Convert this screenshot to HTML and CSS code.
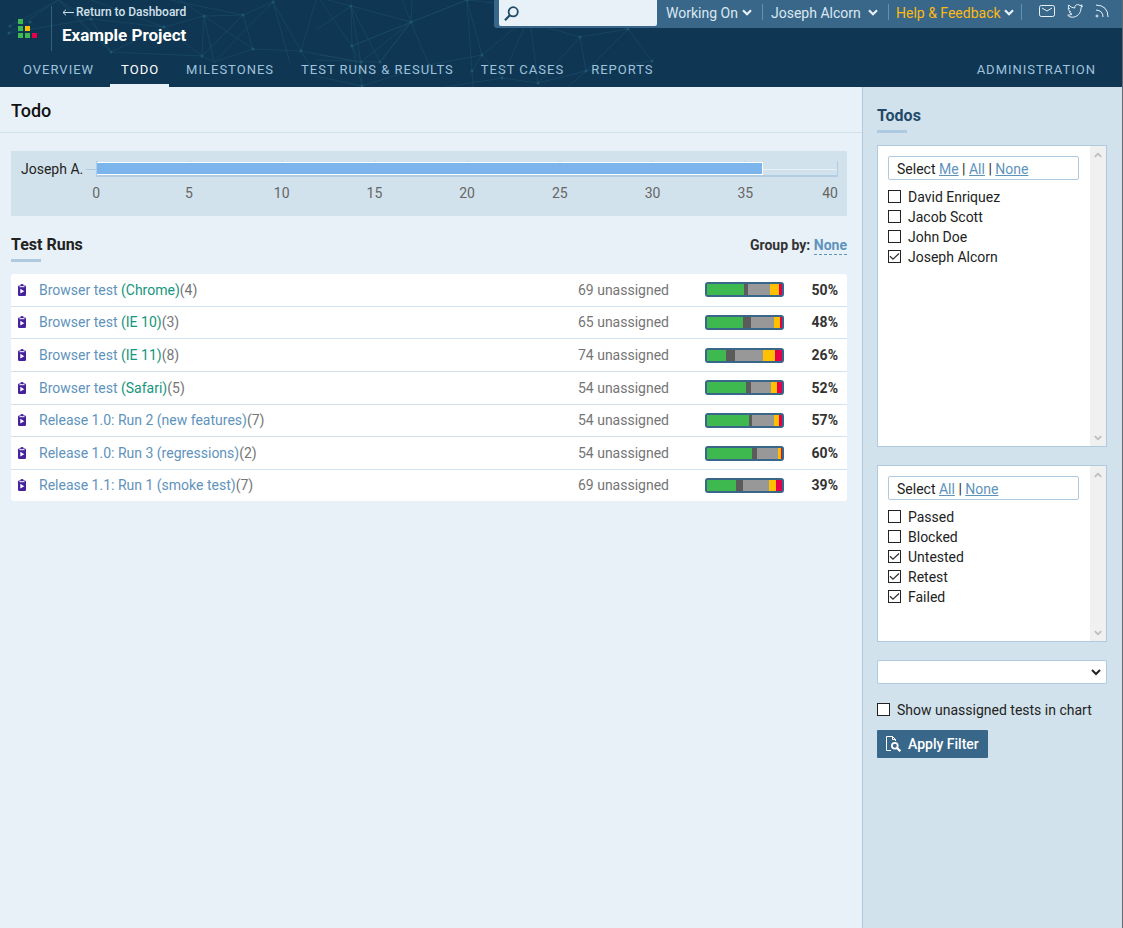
FILE: index.html
```html
<!DOCTYPE html>
<html lang="en">
<head>
<meta charset="UTF-8">
<meta name="viewport" content="width=device-width, initial-scale=1.0">
<title>Todo - Example Project</title>
<link rel="stylesheet" href="styles.css">
</head>
<body>
<!-- shared icons -->
<svg class="defs" aria-hidden="true">
<symbol id="chevron" viewBox="0 0 10 7"><path d="M1 1.2l4 4 4-4" fill="none" stroke="currentColor" stroke-width="2.2"/></symbol>
<symbol id="run" viewBox="0 0 8 12"><path d="M1.2 1.5H2.5V0.8Q2.5 0 4 0T5.5 0.8V1.5H6.8Q8 1.5 8 2.7V10.8Q8 12 6.8 12H1.2Q0 12 0 10.8V2.7Q0 1.5 1.2 1.5z" fill="#45219c"/><path d="M1.5 2.7h5" stroke="#fff"/><path d="M2.3 4.8v4.8l4-2.4z" fill="#fff"/></symbol>
</svg>
<div class="page">
<header class="header">
<svg class="network" width="660" height="87" viewBox="0 0 660 87" aria-hidden="true">
<path d="M9 33L58 0M10 26L58 0L91 19L164 27L111 52L58 0M9 33L91 19L111 52L202 56L164 27M111 52L60 0M164 27L91 0M164 27L204 16L243 15L170 0M204 16L202 56L214 62L253 49L243 15L273 2L301 51L316 0M204 16L253 49L301 51L361 62M204 16L180 0M202 56L243 15M204 16L214 62L273 2M273 2L290 63M301 51L316 76L362 86L361 62L320 55M320 0L352 46L351 6L328 0M351 6L316 30M351 6L411 22L361 62L352 46L411 22L380 62L351 6L361 62M411 22L402 0M411 22L412 0M411 22L467 0L352 46M411 22L429 65L362 86L352 46M411 22L380 62L316 60M467 0L472 71L482 55L467 0L520 6M482 55L429 65M482 55L502 78L538 83L586 71M482 55L515 28M472 71L473 87M502 78L524 28M538 83L531 28M502 78L445 87M538 83L580 37L548 28M580 37L586 71L652 61L628 29L586 71M580 37L628 29L615 24M568 87L586 71" fill="none" stroke="#1a4a66" stroke-width=".7"/>
<g fill="#1d5573"><circle cx="9" cy="33" r="1.5"/><circle cx="10" cy="26" r="1.5"/><circle cx="30" cy="22" r="1.5"/><circle cx="91" cy="19" r="1.5"/><circle cx="111" cy="52" r="1.5"/><circle cx="164" cy="27" r="1.5"/><circle cx="204" cy="16" r="1.5"/><circle cx="202" cy="56" r="1.5"/><circle cx="243" cy="15" r="1.5"/><circle cx="253" cy="49" r="1.5"/><circle cx="273" cy="2" r="1.5"/><circle cx="301" cy="51" r="1.5"/><circle cx="351" cy="6" r="1.5"/><circle cx="411" cy="22" r="1.5"/><circle cx="467" cy="0" r="1.5"/><circle cx="352" cy="46" r="1.5"/><circle cx="361" cy="62" r="1.5"/><circle cx="380" cy="62" r="1.5"/><circle cx="429" cy="65" r="1.5"/><circle cx="482" cy="55" r="1.5"/><circle cx="472" cy="71" r="1.5"/><circle cx="362" cy="86" r="1.5"/><circle cx="502" cy="78" r="1.5"/><circle cx="538" cy="83" r="1.5"/><circle cx="586" cy="71" r="1.5"/><circle cx="580" cy="37" r="1.5"/><circle cx="628" cy="29" r="1.5"/><circle cx="652" cy="61" r="1.5"/></g>
</svg>
<div class="top">
<svg class="logo" width="19" height="19" viewBox="0 0 19 19" role="img" aria-label="Logo"><path d="M0 0h5v5H0zM0 7h5v5H0zM0 14h5v5H0zM7 14h5v5H7z" fill="#3fb950"/><path d="M7 7h5v5H7z" fill="#fec001"/><path d="M14 14h5v5h-5z" fill="#e5004c"/></svg>
<div class="project">
<a class="back" href="#"><svg width="12" height="7" viewBox="0 0 12 7" aria-hidden="true"><path d="M12 3.5H1M4 .7L1 3.5l3 2.8" fill="none" stroke="currentColor"/></svg>Return to Dashboard</a>
<div class="project-name">Example Project</div>
</div>
<div class="userbar">
<label class="search">
<svg width="15" height="15" viewBox="0 0 15 15" aria-hidden="true"><circle cx="9.2" cy="5.8" r="4.6" fill="none" stroke="#1f4a68" stroke-width="1.8"/><path d="M5.8 9.2L1 14.2" stroke="#1f4a68" stroke-width="2.2"/></svg>
<input type="text" aria-label="Search">
</label>
<button class="menu working">Working On <svg width="10" height="7"><use href="#chevron"/></svg></button>
<button class="menu user">Joseph Alcorn <svg width="10" height="7"><use href="#chevron"/></svg></button>
<button class="menu help">Help &amp; Feedback <svg width="10" height="7"><use href="#chevron"/></svg></button>
<div class="social">
<a href="#" aria-label="Mail"><svg width="16" height="12" viewBox="0 0 16 12"><rect x=".5" y=".5" width="15" height="11" rx="1.8"/><path d="M3 3l5 3 5-3"/></svg></a>
<a href="#" aria-label="Twitter"><svg width="16" height="14" viewBox="0 0 16 14"><path d="M.7 11.2C2.4 11.2 3.8 10.9 5 10C3.5 9.8 2.7 9 2.3 7.8H3.7C2 7.2 1.2 6 1.2 4.5L2.5 4.9C1.2 3.7 1 2.2 1.7 .9C3.3 2.8 5.2 3.8 7.8 4C7.4 1.9 9 .6 10.7 .6C11.7 .6 12.4 1 13 1.6L15 .9L14.1 2.5L15.5 2.2L14 3.8C14 9.5 10 13.2 5.3 13.2C3.6 13.2 2 12.7 .7 11.2z"/></svg></a>
<a href="#" aria-label="RSS"><svg width="14" height="14" viewBox="0 0 14 14"><path d="M1 1Q13 1.5 13 13M1 6Q8 6.5 8 13"/><circle cx="2" cy="12" r="1"/></svg></a>
</div>
</div>
</div>
<nav class="tabs">
<a href="#">OVERVIEW</a>
<a href="#" class="active">TODO</a>
<a href="#">MILESTONES</a>
<a href="#">TEST RUNS &amp; RESULTS</a>
<a href="#">TEST CASES</a>
<a href="#">REPORTS</a>
<a href="#" class="admin">ADMINISTRATION</a>
</nav>
</header>
<div class="columns">
<main class="main">
<h1>Todo</h1>
<div class="content">
<div class="chart">
<div class="chart-label">Joseph A.</div>
<div class="tick"></div>
<div class="plot"><div class="bar" style="width:90%"></div></div>
<div class="scale"><span>0</span><span>5</span><span>10</span><span>15</span><span>20</span><span>25</span><span>30</span><span>35</span><span>40</span></div>
</div>
<div class="runs-head">
<h2>Test Runs</h2>
<div class="group">Group by: <a href="#">None</a></div>
</div>
<table class="runs">
<tr><td class="icon"><svg width="8" height="12"><use href="#run"/></svg></td><td><a href="#">Browser test <em>(Chrome)</em></a><span>(4)</span></td><td class="unassigned">69 unassigned</td><td class="progress"><div class="status"><i style="flex:37"></i><i style="flex:4"></i><i style="flex:22"></i><i style="flex:9"></i><i style="flex:3"></i></div></td><td class="percent">50%</td></tr>
<tr><td class="icon"><svg width="8" height="12"><use href="#run"/></svg></td><td><a href="#">Browser test <em>(IE 10)</em></a><span>(3)</span></td><td class="unassigned">65 unassigned</td><td class="progress"><div class="status"><i style="flex:36"></i><i style="flex:8"></i><i style="flex:23"></i><i style="flex:6"></i><i style="flex:2"></i></div></td><td class="percent">48%</td></tr>
<tr><td class="icon"><svg width="8" height="12"><use href="#run"/></svg></td><td><a href="#">Browser test <em>(IE 11)</em></a><span>(8)</span></td><td class="unassigned">74 unassigned</td><td class="progress"><div class="status"><i style="flex:19"></i><i style="flex:9"></i><i style="flex:28"></i><i style="flex:12"></i><i style="flex:7"></i></div></td><td class="percent">26%</td></tr>
<tr><td class="icon"><svg width="8" height="12"><use href="#run"/></svg></td><td><a href="#">Browser test <em>(Safari)</em></a><span>(5)</span></td><td class="unassigned">54 unassigned</td><td class="progress"><div class="status"><i style="flex:39"></i><i style="flex:5"></i><i style="flex:20"></i><i style="flex:6"></i><i style="flex:5"></i></div></td><td class="percent">52%</td></tr>
<tr><td class="icon"><svg width="8" height="12"><use href="#run"/></svg></td><td><a href="#">Release 1.0: Run 2 (new features)</a><span>(7)</span></td><td class="unassigned">54 unassigned</td><td class="progress"><div class="status"><i style="flex:42"></i><i style="flex:3"></i><i style="flex:22"></i><i style="flex:5"></i><i style="flex:3"></i></div></td><td class="percent">57%</td></tr>
<tr><td class="icon"><svg width="8" height="12"><use href="#run"/></svg></td><td><a href="#">Release 1.0: Run 3 (regressions)</a><span>(2)</span></td><td class="unassigned">54 unassigned</td><td class="progress"><div class="status"><i style="flex:45"></i><i style="flex:5"></i><i style="flex:21"></i><i style="flex:3"></i><i style="flex:1"></i></div></td><td class="percent">60%</td></tr>
<tr><td class="icon"><svg width="8" height="12"><use href="#run"/></svg></td><td><a href="#">Release 1.1: Run 1 (smoke test)</a><span>(7)</span></td><td class="unassigned">69 unassigned</td><td class="progress"><div class="status"><i style="flex:29"></i><i style="flex:7"></i><i style="flex:26"></i><i style="flex:7"></i><i style="flex:6"></i></div></td><td class="percent">39%</td></tr>
</table>
</div>
</main>
<aside class="sidebar">
<h2>Todos</h2>
<div class="listbox users">
<div class="list">
<div class="pick">Select <a href="#">Me</a> | <a href="#">All</a> | <a href="#">None</a></div>
<label><input type="checkbox">David Enriquez</label>
<label><input type="checkbox">Jacob Scott</label>
<label><input type="checkbox">John Doe</label>
<label><input type="checkbox" checked>Joseph Alcorn</label>
</div>
<div class="scroll"><svg class="up" width="8" height="6"><use href="#chevron"/></svg><svg width="8" height="6"><use href="#chevron"/></svg></div>
</div>
<div class="listbox statuses">
<div class="list">
<div class="pick">Select <a href="#">All</a> | <a href="#">None</a></div>
<label><input type="checkbox">Passed</label>
<label><input type="checkbox">Blocked</label>
<label><input type="checkbox" checked>Untested</label>
<label><input type="checkbox" checked>Retest</label>
<label><input type="checkbox" checked>Failed</label>
</div>
<div class="scroll"><svg class="up" width="8" height="6"><use href="#chevron"/></svg><svg width="8" height="6"><use href="#chevron"/></svg></div>
</div>
<select class="milestone" aria-label="Milestone"><option></option></select>
<label class="show"><input type="checkbox">Show unassigned tests in chart</label>
<button class="apply"><svg width="15" height="16" viewBox="0 0 15 16" aria-hidden="true"><path d="M5 14.5H.5V.5H6.5L9.5 3.5V5M6.5 .5V3.5H9.5" fill="none" stroke="#fff"/><circle cx="8.8" cy="9.8" r="2.9" fill="none" stroke="#fff" stroke-width="1.8"/><path d="M11 12l3.3 3.2" stroke="#fff" stroke-width="2.2"/></svg>Apply Filter</button>
</aside>
</div>
</div>
</body>
</html>
```
FILE: styles.css
```css
*{margin:0;padding:0;box-sizing:border-box;}
body{font:14px/20px Roboto,Arial,sans-serif;color:#222;background:#e9f1f8;}
a{color:#5e93bc;text-decoration:none;}
button,input,select{font:inherit;color:inherit;}
button{border:none;cursor:pointer;}
svg{display:block;flex:none;}
.defs{position:absolute;width:0;height:0;}
.page{display:flex;flex-direction:column;min-height:100vh;border-right:1px solid #646a70;}

/* Header */
.header{position:relative;background:#0f3652;color:#fff;}
.network{position:absolute;top:0;left:0;}
.top{position:relative;display:flex;align-items:flex-start;height:54px;}
.logo{margin:19px 14px 0 18px;}
.project{border-left:1px solid #32617f;padding-left:10px;margin-top:6px;height:45px;}
.back{display:flex;align-items:center;gap:2px;font-size:12px;line-height:12px;font-weight:500;color:#d2e2ec;}
.project-name{font-size:17px;line-height:20px;font-weight:700;margin-top:7px;}
.userbar{display:flex;margin-left:auto;height:28px;background:#38678a;border-bottom-left-radius:3px;color:#dce8f1;}
.search{display:flex;align-items:center;width:158px;height:26px;margin-left:5px;padding-left:5px;background:#e9f1f8;border-radius:0 0 2px 2px;}
.search input{flex:1;min-width:0;border:none;outline:none;background:none;color:#222;}
.menu{position:relative;display:flex;align-items:center;justify-content:space-between;height:25px;padding:0 11px 0 9px;background:none;white-space:nowrap;}
.menu svg{color:#e9f1f8;}
.menu::after{content:"";position:absolute;right:0;top:4px;height:16px;border-right:1px solid #5b93bd;}
.working{width:106px;}
.user{width:126px;padding-left:8px;}
.help{width:133px;padding:0 8px 0 7px;color:#fdb913;}
.social{display:flex;gap:12px;padding:3px 13px 0 17px;}
.social a{display:flex;align-items:center;height:15px;}
.social svg{fill:none;stroke:#e9f1f8;}
.tabs{position:relative;display:flex;gap:6px;padding:0 16px 0 12px;}
.tabs a{padding:6px 10px 4px 11px;border-bottom:3px solid transparent;color:#9fc3dd;font-size:13px;letter-spacing:1px;white-space:nowrap;}
.tabs .active{color:#fff;border-color:#e9f1f8;}
.tabs .admin{margin-left:auto;}

.columns{flex:1;display:flex;}
.main{flex:1;min-width:0;}
h1{font-size:18px;line-height:24px;font-weight:500;color:#111;padding:12px 11px 9px;border-bottom:1px solid #d2e2ec;}
h2{font-size:16px;line-height:20px;font-weight:700;}
h2::after{content:"";display:block;width:30px;height:3px;margin-top:4px;background:#aecae0;}
.content{padding:18px 15px 18px 11px;}

/* Chart */
.chart{display:grid;grid-template-columns:auto 10px 1fr;padding:10px 9px 13px 10px;background:#d2e2ec;}
.chart-label{line-height:16px;padding-right:3px;}
.tick{height:9px;border-bottom:1px solid #aecae0;}
.plot{height:16px;padding:1px 0;border:solid #b2cde2;border-width:0 1px 2px;background:linear-gradient(#e9f1f8,#e9f1f8) 0 8px/100% 1px no-repeat,linear-gradient(90deg,#aecae0 1px,transparent 1px) 0 0/12.5% 100%;}
.bar{height:13px;background:#7cb5ec;border:1px solid #fff;border-left:none;}
.scale{grid-column:3;display:flex;justify-content:space-between;margin-top:6px;color:#666;}
.scale span{display:flex;justify-content:center;width:0;}
.scale span:last-child{justify-content:flex-end;}

/* Test runs */
.runs-head{display:flex;justify-content:space-between;margin:19px 0 12px;}
.group{font-weight:700;color:#333;}
.group a{display:inline-block;line-height:18px;border-bottom:1px dashed #5e93bc;}
.runs{width:100%;height:227px;border-collapse:separate;border-spacing:0;background:#fff;border-radius:3px;}
.runs td{border-bottom:1px solid #d2e2ec;vertical-align:middle;color:#757575;}
.runs tr:last-child td{border-bottom:none;}
.runs em{font-style:normal;color:#15967d;}
.icon{width:28px;padding-left:7px;}
.unassigned{text-align:right;}
.runs .progress{width:115px;padding-left:36px;}
.status{display:flex;width:79px;height:15px;border:2px solid #38678a;border-radius:3px;}
.status i:nth-child(1){background:#3eb950;}
.status i:nth-child(2){background:#5b5b5b;}
.status i:nth-child(3){background:#989898;}
.status i:nth-child(4){background:#fec001;}
.status i:nth-child(5){background:#e5004c;}
.runs .percent{width:63px;padding-right:9px;text-align:right;font-weight:700;color:#333;}

/* Sidebar */
.sidebar{width:260px;padding:19px 15px 18px 14px;background:#d2e2ec;border-left:1px solid #aecae0;}
.sidebar h2{color:#23496a;margin-bottom:12px;}
.listbox{display:flex;background:#fff;border:1px solid #aecae0;margin-bottom:18px;}
.users{min-height:302px;}
.statuses{min-height:177px;}
.list{flex:1;padding:10px 11px 10px 10px;}
.pick{line-height:22px;height:24px;padding:1px 8px 0;margin-bottom:7px;border:1px solid #aecae0;border-radius:2px;white-space:nowrap;}
.pick a{text-decoration:underline;}
.list label,.show{display:flex;align-items:center;gap:7px;}
input[type=checkbox]{appearance:none;width:13px;height:13px;margin-bottom:2px;border:1px solid #222;background:#fff;}
input[type=checkbox]:checked{background:#fff url("data:image/svg+xml,%3Csvg xmlns='http://www.w3.org/2000/svg' viewBox='0 0 11 11'%3E%3Cpath d='M1 5.2l3 3L10 2.500' fill='none' stroke='%23333' stroke-width='1.300'/%3E%3C/svg%3E");}
.scroll{display:flex;flex-direction:column;justify-content:space-between;align-items:center;width:16px;padding:6px 0 5px;background:#f0f0f0;color:#bdbdbd;}
.up{transform:rotate(180deg);}
.milestone{display:block;width:100%;height:24px;appearance:none;border:1px solid #aecae0;border-radius:2px;background:#fff url("data:image/svg+xml,%3Csvg xmlns='http://www.w3.org/2000/svg' width='10' height='7'%3E%3Cpath d='M1 1l4 4 4-4' fill='none' stroke='%23222' stroke-width='2'/%3E%3C/svg%3E") right 5px center no-repeat;}
.show{margin:16px 0 10px;}
.apply{display:flex;align-items:center;gap:7px;height:28px;padding:0 9px;background:#38678a;border-radius:1px;color:#fff;font-weight:500;}
```
